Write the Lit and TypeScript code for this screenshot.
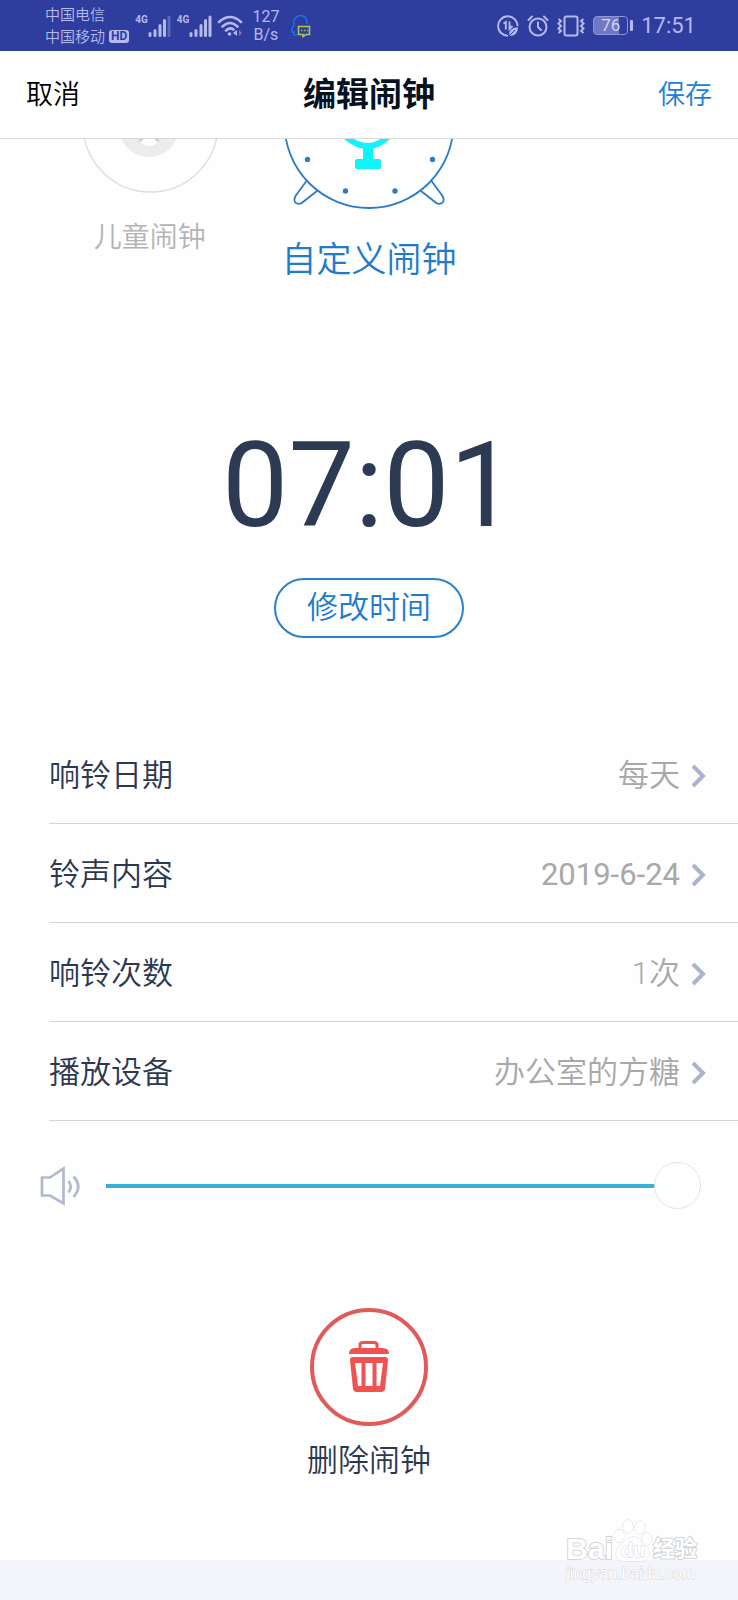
import { LitElement, html, css, svg } from "lit";
import { customElement, state } from "lit/decorators.js";

interface Setting {
  label: string;
  value: string;
}

@customElement("status-bar")
class StatusBar extends LitElement {
  static styles = css`
    :host {
      display: flex;
      justify-content: space-between;
      align-items: center;
      height: 51px;
      padding: 0 42px 0 45px;
      background: #2f3d9f;
      color: #b5b9ee;
      font-family: Roboto, "Noto Sans CJK SC", sans-serif;
      font-weight: 400;
    }
    .group {
      display: flex;
      align-items: center;
    }
    .carriers {
      display: grid;
      font-size: 15px;
      line-height: 22px;
      font-weight: 350;
    }
    .carrier {
      display: flex;
      align-items: center;
      gap: 4px;
    }
    .hd {
      padding: 0 2px;
      border-radius: 3px;
      background: #b5b9ee;
      color: #2f3d9f;
      font-size: 12px;
      line-height: 13px;
      font-weight: 700;
    }
    .signal {
      display: flex;
      margin-left: 6px;
    }
    .gen {
      font-size: 10px;
      line-height: 12px;
      font-weight: 700;
    }
    svg {
      display: block;
      fill: none;
      stroke: currentColor;
    }
    .wifi {
      margin-left: 5px;
    }
    .rate {
      display: grid;
      margin-left: 9px;
      font-size: 16px;
      line-height: 18px;
      text-align: center;
    }
    .chat {
      margin-left: 11px;
    }
    .right {
      gap: 8px;
    }
    .battery {
      display: flex;
      align-items: center;
      gap: 2px;
    }
    .level {
      box-sizing: border-box;
      width: 35px;
      height: 19px;
      border: 1px solid #8e94d8;
      border-radius: 4px;
      background: linear-gradient(90deg, #7079c4 76%, #2f3d9f 76%);
      color: #d0d3f8;
      font-size: 17px;
      line-height: 17px;
      text-align: center;
    }
    .cap {
      width: 3px;
      height: 11px;
      border-radius: 1px;
      background: #b5b9ee;
    }
    .clock {
      font-size: 22px;
      line-height: 26px;
    }
  `;

  private bars(last: number) {
    return html`<span class="signal">
      <span class="gen">4G</span>
      <svg width="23" height="24" viewBox="0 0 23 24" stroke-width="3" stroke-linecap="round" aria-hidden="true">
        <path d="M2 21.500V19.500M7 21.500V16.500M12 21.500V11.500M16.500 21.500V6.500" />
        <path d="M21 21.500V3" opacity=${last} />
      </svg>
    </span>`;
  }

  render() {
    return html`
      <div class="group">
        <div class="carriers">
          <span>中国电信</span>
          <span class="carrier">中国移动<span class="hd">HD</span></span>
        </div>
        ${this.bars(0.35)} ${this.bars(1)}
        <svg class="wifi" width="26" height="22" viewBox="0 0 26 22" stroke-width="2.600" stroke-linecap="round" aria-hidden="true">
          <path d="M2 7Q13-3 24 7M5.500 11.500Q13 4.500 20.500 11.500M9 15.500Q13 12 16.500 14.500" />
          <circle cx="12.500" cy="19" r="1.800" fill="currentColor" stroke="none" />
          <path d="M20 15V21L16 18Z" fill="currentColor" stroke="none" />
          <path d="M22 15V21L25 18Z" fill="currentColor" stroke="none" opacity="0.5" />
        </svg>
        <div class="rate"><span>127</span><span>B/s</span></div>
        <svg class="chat" width="21" height="24" viewBox="0 0 21 24" stroke-width="1.600" aria-hidden="true">
          <path stroke="#1d6fe6" d="M7 21Q3 22 4 18Q1 19 2 15Q4 12 4 8A6.500 6.500 0 0 1 17 8V10" />
          <path stroke="#a9c653" d="M8.500 12.500H19.500V20.500H16L13 22.500V20.500H8.500Z" />
          <path stroke="#a9c653" stroke-dasharray="1.500 1.500" d="M11 16.500H18" />
        </svg>
      </div>
      <div class="group right">
        <svg width="22" height="22" viewBox="0 0 22 22" stroke-width="1.900" aria-hidden="true">
          <path d="M20.500 11A9.700 9.700 0 1 0 11 20.700M6.500 8.500L8.800 7V14.500M12.500 6.500V14L15.500 11" />
          <path d="M12 21Q11 13 21 12Q21 21 12 21Z" fill="currentColor" stroke="none" />
          <path d="M12 21L18 15" stroke="#2f3d9f" stroke-width="1" />
        </svg>
        <svg width="22" height="22" viewBox="0 0 22 22" stroke-width="2" stroke-linecap="round" aria-hidden="true">
          <circle cx="11" cy="12" r="8.500" />
          <path d="M11 7.500V12L14 15M1.500 5L5 1.500M20.500 5L17 1.500" />
        </svg>
        <svg width="28" height="22" viewBox="0 0 28 22" stroke-width="2" aria-hidden="true">
          <rect x="7.500" y="1.500" width="13" height="19" rx="2" />
          <path d="M1.500 4L4 6L1.500 8.500L4 11L1.500 13.500L4 16L1.500 18M26.500 4L24 6L26.500 8.500L24 11L26.500 13.500L24 16L26.500 18" />
        </svg>
        <span class="battery"><span class="level">76</span><span class="cap"></span></span>
        <span class="clock">17:51</span>
      </div>
    `;
  }
}

@customElement("baidu-mark")
class BaiduMark extends LitElement {
  static styles = css`
    :host {
      display: block;
      color: #ffffff;
      font-family: "Liberation Sans", "Noto Sans CJK SC", sans-serif;
      -webkit-text-stroke: 1px #d4d5d9;
    }
    .top {
      display: flex;
      align-items: flex-end;
      font-weight: 700;
      paint-order: stroke fill;
      -webkit-text-stroke-width: 2px;
    }
    .bai {
      font-size: 30px;
      line-height: 28px;
    }
    .paw {
      display: block;
      overflow: visible;
      font-size: 20px;
    }
    .cn {
      font-size: 22px;
      line-height: 28px;
    }
    .url {
      font-size: 16px;
      line-height: 22px;
      font-weight: 400;
      color: #ffffff;
      paint-order: stroke fill;
    }
  `;

  render() {
    return html`
      <div class="top">
        <span class="bai">Bai</span>
        <svg class="paw" width="40" height="44" viewBox="0 0 40 44" fill="#ffffff" stroke="#d4d5d9" aria-hidden="true">
          <ellipse cx="6" cy="17" rx="5" ry="6.500" />
          <ellipse cx="15" cy="7.500" rx="5" ry="6.500" />
          <ellipse cx="27" cy="8.500" rx="5" ry="6.500" />
          <ellipse cx="34" cy="20" rx="5" ry="6" />
          <path d="M12 22Q20 13 28 22Q38 30 36 36Q33 43 26 42H13Q5 43 3 36Q2 30 12 22Z" />
          <text x="8" y="38">du</text>
        </svg>
        <span class="cn">经验</span>
      </div>
      <div class="url">jingyan.baidu.com</div>
    `;
  }
}

@customElement("app-root")
class AppRoot extends LitElement {
  @state() private volume = 100;

  private settings: Setting[] = [
    { label: "响铃日期", value: "每天" },
    { label: "铃声内容", value: "2019-6-24" },
    { label: "响铃次数", value: "1次" },
    { label: "播放设备", value: "办公室的方糖" },
  ];

  static styles = css`
    :host {
      display: flex;
      flex-direction: column;
      position: relative;
      min-height: 100vh;
      background: #fefefe;
      color: #2c3850;
      font-family: Roboto, "Noto Sans CJK SC", sans-serif;
      font-size: 31px;
      line-height: 40px;
      font-weight: 350;
    }
    button {
      margin: 0;
      padding: 0;
      border: 0;
      background: none;
      color: inherit;
      font: inherit;
      cursor: pointer;
    }
    svg {
      display: block;
    }
    .nav {
      display: grid;
      grid-template-columns: 1fr auto 1fr;
      align-items: center;
      height: 87px;
      padding: 0 26px;
      border-bottom: 1px solid #d9d9d9;
      background: #ffffff;
    }
    .title {
      margin: 0;
      color: #06121f;
      font-size: 33px;
      line-height: 40px;
      font-weight: 700;
    }
    .action {
      justify-self: start;
      color: #000000;
      font-size: 27px;
    }
    .save {
      justify-self: end;
      color: #1a80d8;
    }
    .kinds {
      display: grid;
      grid-template-columns: repeat(3, 1fr);
      align-items: start;
      padding: 0 40px;
    }
    .kind {
      display: flex;
      flex-direction: column;
      align-items: center;
      gap: 25px;
      color: #b3b3b3;
      font-size: 28px;
    }
    .kind.on {
      gap: 30px;
      color: #1f7bcc;
      font-size: 35px;
    }
    .time {
      margin-top: 136px;
      color: #2c3a54;
      font-size: 118px;
      line-height: 138px;
      font-weight: 400;
      text-align: center;
    }
    .change {
      align-self: center;
      margin-top: 23px;
      padding: 8px 31px;
      border: 2px solid #2a80c8;
      border-radius: 30px;
      color: #1f7bcc;
    }
    .rows {
      margin: 87px 0 0;
      padding: 0 0 0 49px;
      list-style: none;
    }
    .row {
      display: flex;
      align-items: center;
      width: 100%;
      height: 99px;
      padding: 4px 32px 0 0;
      border-bottom: 1px solid #d6d6d9;
    }
    .value {
      margin-left: auto;
      margin-right: 11px;
      color: #a8a8a8;
    }
    .value.digits {
      font-weight: 400;
    }
    .volume {
      display: flex;
      align-items: center;
      gap: 25px;
      padding: 41px 37px 0 40px;
    }
    .slider {
      flex: 1;
      min-width: 0;
      height: 47px;
      margin: 0;
      appearance: none;
      background: none;
    }
    .slider::-webkit-slider-runnable-track {
      height: 47px;
      background: linear-gradient(#35b1dc, #35b1dc) center / 100% 4px no-repeat;
    }
    .slider::-webkit-slider-thumb {
      appearance: none;
      box-sizing: border-box;
      width: 47px;
      height: 47px;
      border: 1px solid #e4e4e6;
      border-radius: 50%;
      background: #ffffff;
    }
    .remove {
      display: flex;
      flex-direction: column;
      align-items: center;
      align-self: center;
      gap: 15px;
      margin-top: 99px;
    }
    .foot {
      height: 40px;
      margin-top: auto;
      background: #f4f5fa;
    }
    .mark {
      position: absolute;
      right: 41px;
      bottom: 15px;
    }
  `;

  private kindIcons() {
    const leg = svg`<path d="M23.500 42L12.500 57Q10 62 13 64Q17 66 20 63L34 52" />`;
    return {
      child: html`<svg width="140" height="54" viewBox="0 0 140 54" fill="none" aria-hidden="true">
        <circle cx="70.500" cy="-14.500" r="67.500" stroke="#dedede" stroke-width="1.400" />
        <circle cx="69" cy="-12" r="30" fill="#ececec" />
        <ellipse cx="69" cy="2" rx="8" ry="5" fill="#ffffff" />
        <path d="M59 2L63 0M75 0L79 2" stroke="#c8c8c8" stroke-width="1.500" />
      </svg>`,
      custom: html`<svg width="172" height="72" viewBox="0 0 172 72" fill="none" stroke="#2a7cc9" stroke-width="1.800" aria-hidden="true">
        <circle cx="86" cy="-15.500" r="84.500" />
        ${leg}
        <g transform="matrix(-1 0 0 1 172 0)">${leg}</g>
        <g fill="#2a7cc9" stroke="none">
          <circle cx="24.500" cy="20.500" r="2.700" />
          <circle cx="149.500" cy="20.500" r="2.700" />
          <circle cx="62.500" cy="52" r="2.700" />
          <circle cx="112" cy="52" r="2.700" />
        </g>
        <path d="M59 -6Q85 20 109 -6" stroke="#0ff4fb" stroke-width="6" />
        <g fill="#0ff4fb" stroke="none">
          <rect x="80" y="8" width="10" height="14" />
          <rect x="72" y="20" width="26" height="10" rx="2" />
        </g>
      </svg>`,
    };
  }

  private onVolume(event: Event) {
    this.volume = Number((event.target as HTMLInputElement).value);
  }

  render() {
    const icons = this.kindIcons();
    return html`
      <status-bar></status-bar>
      <header class="nav">
        <button class="action">取消</button>
        <h1 class="title">编辑闹钟</h1>
        <button class="action save">保存</button>
      </header>
      <div class="kinds">
        <button class="kind">${icons.child}<span>儿童闹钟</span></button>
        <button class="kind on">${icons.custom}<span>自定义闹钟</span></button>
      </div>
      <div class="time">07:01</div>
      <button class="change">修改时间</button>
      <ul class="rows">
        ${this.settings.map(
          (item) => html`<li>
            <button class="row">
              <span>${item.label}</span>
              <span class="value ${/^[\d-]+$/.test(item.value) ? "digits" : ""}">${item.value}</span>
              <svg width="15" height="24" viewBox="0 0 15 24" fill="none" stroke="#aab5cb" stroke-width="4" aria-hidden="true">
                <path d="M2 2L12 12L2 22" />
              </svg>
            </button>
          </li>`
        )}
      </ul>
      <div class="volume">
        <svg width="41" height="40" viewBox="0 0 41 40" fill="none" stroke="#b0b9cd" stroke-width="2.700" aria-hidden="true">
          <path d="M2 11.500H10L23.500 2.500V37.500L10 29.500H2Z" />
          <path d="M28.500 15Q33 20.500 28.500 26.500M33.500 10.500Q43 20.500 33.500 31" />
        </svg>
        <input class="slider" type="range" min="0" max="100" aria-label="音量" .value=${String(this.volume)} @input=${this.onVolume} />
      </div>
      <button class="remove">
        <svg width="118" height="118" viewBox="0 0 118 118" fill="none" aria-hidden="true">
          <circle cx="59" cy="59" r="57" stroke="#e05a5a" stroke-width="4" />
          <path d="M50 41V37Q50 34.500 53 34.500H64Q67 34.500 67 37V41" stroke="#f05252" stroke-width="3" />
          <path d="M39 46Q39 40 45 40H73Q79 40 79 46Z" fill="#f05252" />
          <path
            fill="#f05252"
            fill-rule="evenodd"
            d="M43 49H75Q78 49 78 52L75 81Q74.500 84 71 84H47Q43.500 84 43 81L40 52Q40 49 43 49ZM45 55L48 78H51.500V55ZM55.500 55V78H62.500V55ZM66.500 55V78H70L73 55Z"
          />
        </svg>
        <span>删除闹钟</span>
      </button>
      <footer class="foot"></footer>
      <baidu-mark class="mark"></baidu-mark>
    `;
  }
}
